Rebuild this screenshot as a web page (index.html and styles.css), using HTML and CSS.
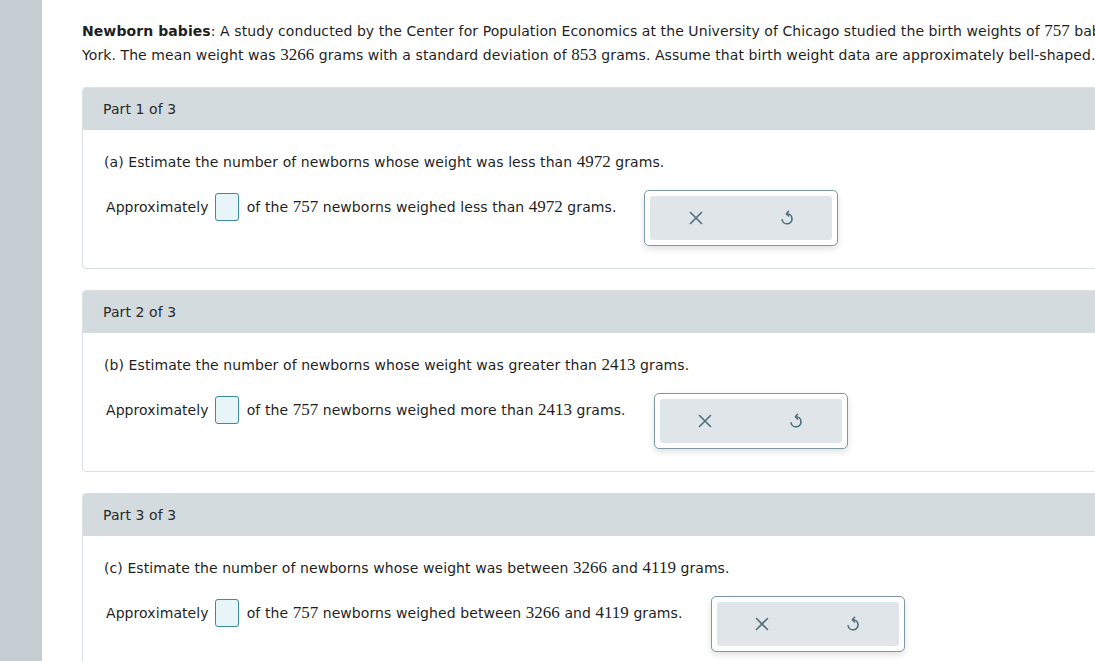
FILE: index.html
```html
<!DOCTYPE html>
<html lang="en">
    <head>
        <meta charset="UTF-8">
        <title>Newborn babies</title>
        <link rel="stylesheet" href="styles.css">
    </head>
    <body>
        <aside class="barra"></aside>
        <main class="contenido">
            <p class="enunciado"><b>Newborn babies</b>: A study conducted by the Center for Population Economics at the University of Chicago studied the birth weights of <span class="num">757</span> babies born in New York. The mean weight was <span class="num">3266</span> grams with a standard deviation of <span class="num">853</span> grams. Assume that birth weight data are approximately bell-shaped.</p>

            <section class="parte">
                <div class="cabecera">Part 1 of 3</div>
                <div class="cuerpo">
                    <p class="pregunta">(a) Estimate the number of newborns whose weight was less than <span class="num">4972</span> grams.</p>
                    <div class="fila">
                        <span class="texto">Approximately <span class="caja"></span> of the <span class="num">757</span> newborns weighed less than <span class="num">4972</span> grams.</span>
                        <div class="botones">
                            <button type="button" class="boton"><svg width="16" height="16" viewBox="0 0 16 16"><path d="M2.5 2.5 L13.5 13.5 M13.5 2.5 L2.5 13.5"/></svg></button>
                            <button type="button" class="boton"><svg width="14" height="18" viewBox="0 0 14 18"><path d="M7 4.8 A5 5 0 1 1 2.1 10.8"/><path d="M8.6 2.3 L6.4 4.7 L8.6 7"/></svg></button>
                        </div>
                    </div>
                </div>
            </section>

            <section class="parte">
                <div class="cabecera">Part 2 of 3</div>
                <div class="cuerpo">
                    <p class="pregunta">(b) Estimate the number of newborns whose weight was greater than <span class="num">2413</span> grams.</p>
                    <div class="fila">
                        <span class="texto">Approximately <span class="caja"></span> of the <span class="num">757</span> newborns weighed more than <span class="num">2413</span> grams.</span>
                        <div class="botones">
                            <button type="button" class="boton"><svg width="16" height="16" viewBox="0 0 16 16"><path d="M2.5 2.5 L13.5 13.5 M13.5 2.5 L2.5 13.5"/></svg></button>
                            <button type="button" class="boton"><svg width="14" height="18" viewBox="0 0 14 18"><path d="M7 4.8 A5 5 0 1 1 2.1 10.8"/><path d="M8.6 2.3 L6.4 4.7 L8.6 7"/></svg></button>
                        </div>
                    </div>
                </div>
            </section>

            <section class="parte">
                <div class="cabecera">Part 3 of 3</div>
                <div class="cuerpo">
                    <p class="pregunta">(c) Estimate the number of newborns whose weight was between <span class="num">3266</span> and <span class="num">4119</span> grams.</p>
                    <div class="fila">
                        <span class="texto">Approximately <span class="caja"></span> of the <span class="num">757</span> newborns weighed between <span class="num">3266</span> and <span class="num">4119</span> grams.</span>
                        <div class="botones">
                            <button type="button" class="boton"><svg width="16" height="16" viewBox="0 0 16 16"><path d="M2.5 2.5 L13.5 13.5 M13.5 2.5 L2.5 13.5"/></svg></button>
                            <button type="button" class="boton"><svg width="14" height="18" viewBox="0 0 14 18"><path d="M7 4.8 A5 5 0 1 1 2.1 10.8"/><path d="M8.6 2.3 L6.4 4.7 L8.6 7"/></svg></button>
                        </div>
                    </div>
                </div>
            </section>
        </main>
    </body>
</html>
```

FILE: styles.css
```css
body {
    margin: 0;
    display: flex;
    height: 661px;
    overflow: hidden;
    background: #ffffff;
    font-family: "DejaVu Sans", Verdana, sans-serif;
    font-size: 14px;
    letter-spacing: 0.08px;
    color: #1f1f1f;
}
.barra {
    width: 42px;
    flex-shrink: 0;
    background: #c3cdd2;
}
.contenido {
    width: 1180px;
    flex-shrink: 0;
    padding: 19px 0 0 40px;
}
.enunciado {
    max-width: 1135px;
    margin: 0 0 20px 0;
    line-height: 24px;
}
.enunciado b {
    font-weight: bold;
}
.num {
    font-family: "Liberation Serif", "Times New Roman", serif;
    font-size: 17px;
    letter-spacing: 0;
}
.parte {
    border: 1px solid #d9dfe2;
    border-radius: 4px;
    margin-bottom: 21px;
    overflow: hidden;
}
.cabecera {
    background: #d3dbde;
    height: 42px;
    line-height: 42px;
    padding-left: 20px;
    color: #2a2a2a;
}
.cuerpo {
    padding: 20px 22px 22px 21px;
}
.pregunta {
    margin: 0 0 16px 0;
    line-height: 24px;
}
.fila {
    display: flex;
    align-items: flex-start;
    padding-left: 2px;
}
.texto {
    display: flex;
    align-items: center;
    white-space: pre;
    height: 30px;
    margin-top: 2px;
}
.caja {
    display: inline-block;
    width: 22px;
    height: 26px;
    margin: 0 3px 0 2px;
    border: 1px solid #3b8c9c;
    border-radius: 3px;
    background: #e7f4f8;
}
.botones {
    display: flex;
    margin-left: 28px;
    padding: 5px;
    border: 1px solid #7d9aa4;
    border-radius: 5px;
    background: #ffffff;
    box-shadow: 0 3px 6px rgba(0, 0, 0, 0.12);
}
.boton {
    width: 91px;
    height: 44px;
    border: none;
    margin: 0;
    padding: 0;
    background: #dfe5e8;
    display: flex;
    align-items: center;
    justify-content: center;
    cursor: pointer;
}
.boton:first-child {
    border-radius: 3px 0 0 3px;
}
.boton:last-child {
    border-radius: 0 3px 3px 0;
}
.boton svg path {
    fill: none;
    stroke: #4d6f7c;
    stroke-width: 1.6;
    stroke-linecap: round;
    stroke-linejoin: round;
}
```
